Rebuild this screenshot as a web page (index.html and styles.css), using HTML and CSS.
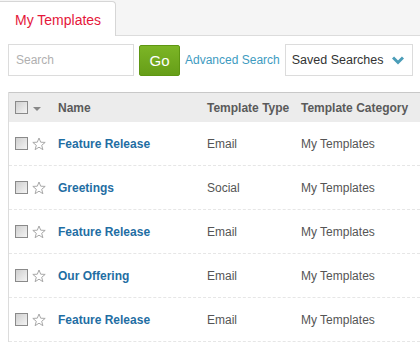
FILE: index.html
```html
<!DOCTYPE html>
<html>
<head>
  <link rel="stylesheet" href="styles.css">
</head>
<body>

  <!-- Tabs -->
  <div class="tabs">
    <div class="tab active">My Templates</div>
  </div>

  <!-- Search bar -->
  <div class="search-bar">
    <input type="text" class="search-input" placeholder="Search">
    <button class="go">Go</button>
    <a href="#" class="advanced">Advanced Search</a>
    <div class="saved">
      <span>Saved Searches</span>
      <svg class="chevron" width="12" height="9" viewBox="0 0 12 9">
        <path d="M1 1.5 L6 6.5 L11 1.5" fill="none" stroke="#4b9db8" stroke-width="3"/>
      </svg>
    </div>
  </div>

  <!-- Template list -->
  <div class="list">
    <div class="row head">
      <div class="c-check"><span class="box"></span><span class="caret"></span></div>
      <div class="c-name">Name</div>
      <div class="c-type">Template Type</div>
      <div class="c-cat">Template Category</div>
    </div>

    <div class="row">
      <div class="c-check"><span class="box"></span><svg class="star" width="14" height="14" viewBox="0 0 14 14"><path d="M7 1 L8.7 5.2 L13.2 5.4 L9.7 8.3 L10.9 12.7 L7 10.2 L3.1 12.7 L4.3 8.3 L0.8 5.4 L5.3 5.2 Z"/></svg></div>
      <div class="c-name"><a href="#">Feature Release</a></div>
      <div class="c-type">Email</div>
      <div class="c-cat">My Templates</div>
    </div>
    <div class="row">
      <div class="c-check"><span class="box"></span><svg class="star" width="14" height="14" viewBox="0 0 14 14"><path d="M7 1 L8.7 5.2 L13.2 5.4 L9.7 8.3 L10.9 12.7 L7 10.2 L3.1 12.7 L4.3 8.3 L0.8 5.4 L5.3 5.2 Z"/></svg></div>
      <div class="c-name"><a href="#">Greetings</a></div>
      <div class="c-type">Social</div>
      <div class="c-cat">My Templates</div>
    </div>
    <div class="row">
      <div class="c-check"><span class="box"></span><svg class="star" width="14" height="14" viewBox="0 0 14 14"><path d="M7 1 L8.7 5.2 L13.2 5.4 L9.7 8.3 L10.9 12.7 L7 10.2 L3.1 12.7 L4.3 8.3 L0.8 5.4 L5.3 5.2 Z"/></svg></div>
      <div class="c-name"><a href="#">Feature Release</a></div>
      <div class="c-type">Email</div>
      <div class="c-cat">My Templates</div>
    </div>
    <div class="row">
      <div class="c-check"><span class="box"></span><svg class="star" width="14" height="14" viewBox="0 0 14 14"><path d="M7 1 L8.7 5.2 L13.2 5.4 L9.7 8.3 L10.9 12.7 L7 10.2 L3.1 12.7 L4.3 8.3 L0.8 5.4 L5.3 5.2 Z"/></svg></div>
      <div class="c-name"><a href="#">Our Offering</a></div>
      <div class="c-type">Email</div>
      <div class="c-cat">My Templates</div>
    </div>
    <div class="row">
      <div class="c-check"><span class="box"></span><svg class="star" width="14" height="14" viewBox="0 0 14 14"><path d="M7 1 L8.7 5.2 L13.2 5.4 L9.7 8.3 L10.9 12.7 L7 10.2 L3.1 12.7 L4.3 8.3 L0.8 5.4 L5.3 5.2 Z"/></svg></div>
      <div class="c-name"><a href="#">Feature Release</a></div>
      <div class="c-type">Email</div>
      <div class="c-cat">My Templates</div>
    </div>
  </div>

</body>
</html>
```

FILE: styles.css
```css
* {
  box-sizing: border-box;
}

body {
  margin: 0;
  background-color: white;
  font-family: "Liberation Sans", Arial, sans-serif;
  font-size: 12px;
  color: #555;
  overflow: hidden;
}

/* tabs */
.tabs {
  height: 36px;
  background-color: #f5f5f5;
  border-bottom: 1px solid #dcdcdc;
  display: flex;
  align-items: flex-end;
}

.tab {
  width: 116px;
  height: 35px;
  margin-bottom: -1px;
  padding: 10px 0 0 15px;
  background-color: white;
  border: 1px solid #d6d6d6;
  border-left: none;
  border-bottom: none;
  border-top-right-radius: 4px;
  font-size: 14px;
  color: #e5173a;
}

/* search */
.search-bar {
  display: flex;
  align-items: center;
  padding: 8px 0 0 8px;
  height: 40px;
}

.search-input {
  width: 126px;
  height: 32px;
  border: 1px solid #dcdcdc;
  padding: 0 7px;
  font-family: inherit;
  font-size: 12px;
  color: #333;
  outline: none;
}

.search-input::placeholder {
  color: #b0b0b0;
}

.go {
  width: 41px;
  height: 31px;
  margin-left: 5px;
  border: 1px solid #5e9612;
  border-radius: 2px;
  background: linear-gradient(#7cb526, #669e18);
  color: white;
  font-family: inherit;
  font-size: 15px;
  padding: 0;
}

.advanced {
  margin-left: 5px;
  color: #3e9bbf;
  text-decoration: none;
  font-size: 12px;
}

.saved {
  display: flex;
  align-items: center;
  justify-content: space-between;
  width: 128px;
  height: 32px;
  margin-left: 5px;
  padding: 0 8px 0 6px;
  border: 1px solid #dcdcdc;
  font-size: 12.5px;
  color: #333;
}

/* list */
.list {
  margin: 16px 0 0 8px;
  border-left: 1px solid #dcdcdc;
}

.row {
  display: flex;
  align-items: center;
  height: 44px;
  border-bottom: 1px dashed #e6e6e6;
  color: #555;
}

.row.head {
  height: 30px;
  background-color: #ececec;
  border-top: 1px solid #c8c8c8;
  border-bottom: none;
  font-weight: bold;
  color: #5a5a5a;
}

.c-check {
  width: 49px;
  padding-left: 6px;
  display: flex;
  align-items: center;
}

.box {
  display: inline-block;
  width: 13px;
  height: 13px;
  border: 1px solid #8a8a8a;
  background: linear-gradient(135deg, #cfcfcf, #f4f4f4);
}

.caret {
  width: 0;
  height: 0;
  margin-left: 5px;
  margin-top: 3px;
  border-left: 4px solid transparent;
  border-right: 4px solid transparent;
  border-top: 4px solid #888;
}

.star {
  margin-left: 4px;
  fill: white;
  stroke: #a8a8a8;
  stroke-width: 1;
  stroke-linejoin: round;
}

.c-name {
  width: 149px;
}

.c-name a {
  color: #1f6ea3;
  font-weight: bold;
  text-decoration: none;
}

.c-type {
  width: 94px;
}

.c-cat {
  flex: 1;
}
```
